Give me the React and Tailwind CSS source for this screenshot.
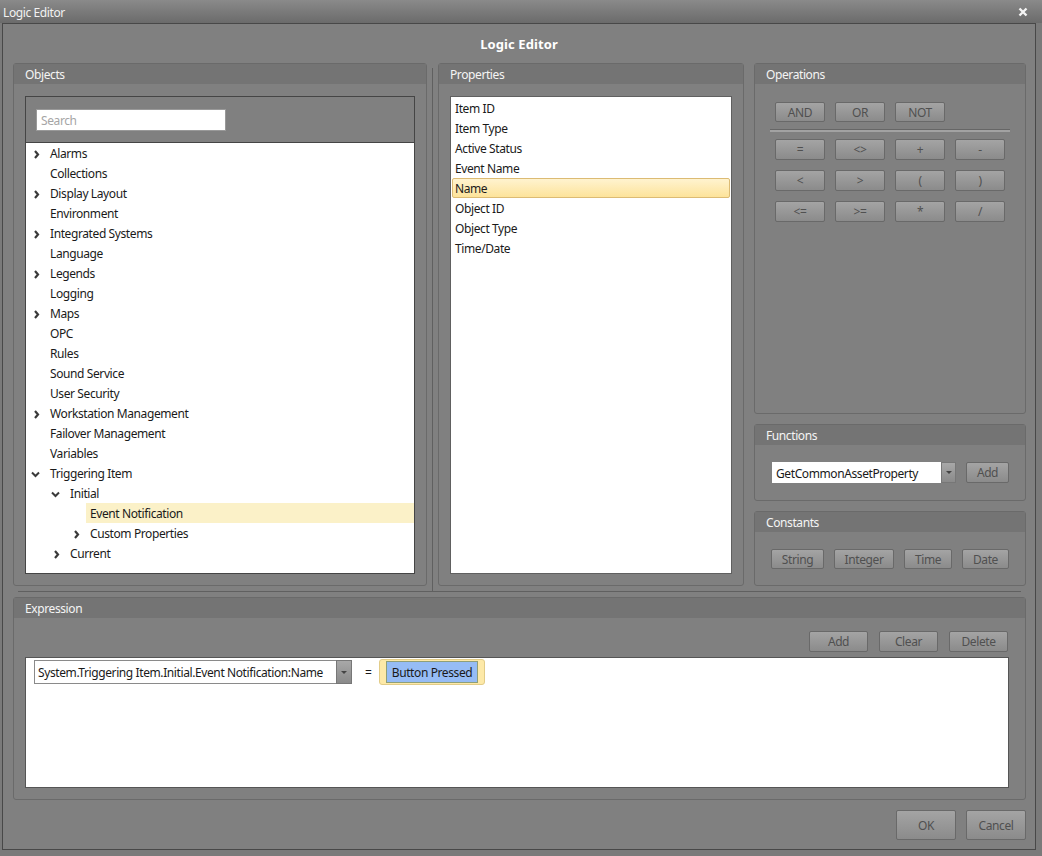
import React from "react";

const objects = [
  { label: "Alarms", level: 0, arrow: "right" },
  { label: "Collections", level: 0 },
  { label: "Display Layout", level: 0, arrow: "right" },
  { label: "Environment", level: 0 },
  { label: "Integrated Systems", level: 0, arrow: "right" },
  { label: "Language", level: 0 },
  { label: "Legends", level: 0, arrow: "right" },
  { label: "Logging", level: 0 },
  { label: "Maps", level: 0, arrow: "right" },
  { label: "OPC", level: 0 },
  { label: "Rules", level: 0 },
  { label: "Sound Service", level: 0 },
  { label: "User Security", level: 0 },
  { label: "Workstation Management", level: 0, arrow: "right" },
  { label: "Failover Management", level: 0 },
  { label: "Variables", level: 0 },
  { label: "Triggering Item", level: 0, arrow: "down" },
  { label: "Initial", level: 1, arrow: "down" },
  { label: "Event Notification", level: 2, selected: true },
  { label: "Custom Properties", level: 2, arrow: "right" },
  { label: "Current", level: 1, arrow: "right" },
];

const properties = ["Item ID", "Item Type", "Active Status", "Event Name", "Name", "Object ID", "Object Type", "Time/Date"];

const levelPad = ["pl-[7px]", "pl-[27px]", "pl-[47px]"];

const Arrow = ({ dir }) =>
  dir === "down" ? (
    <svg width="9" height="7" viewBox="0 0 9 7" className="-ml-[2px]">
      <path d="M1 1.5 L4.5 5 L8 1.5" fill="none" stroke="#3a3a3a" strokeWidth="2" />
    </svg>
  ) : (
    <svg width="7" height="9" viewBox="0 0 7 9">
      <path d="M2 1 L5 4.5 L2 8" fill="none" stroke="#3a3a3a" strokeWidth="2.2" />
    </svg>
  );

const Panel = ({ title, className = "", children }) => (
  <section className={`flex flex-col border border-[#6a6a6a] rounded-[3px] ${className}`}>
    <h2 className="h-[20px] shrink-0 bg-[#747474] pl-[11px] text-[12px] leading-[22px] font-normal text-[#f4f4f4]">
      {title}
    </h2>
    <div className="flex-1 flex flex-col min-h-0">{children}</div>
  </section>
);

const Btn = ({ className = "", children }) => (
  <button className={`shrink-0 rounded-[2px] border border-[#696969] bg-gradient-to-b from-[#a4a4a4] to-[#8b8b8b] pt-px text-[12px] leading-none text-[#505050] ${className}`}>
    {children}
  </button>
);

const ComboArrow = ({ className = "" }) => (
  <div className={`flex items-center justify-center border border-[#777] bg-gradient-to-b from-[#a8a8a8] to-[#8a8a8a] ${className}`}>
    <div className="h-0 w-0 border-x-[3px] border-t-[3px] border-x-transparent border-t-[#444]" />
  </div>
);

export default function App() {
  return (
    <div className="flex h-[856px] w-[1042px] flex-col overflow-hidden bg-[#7a7a7a] font-['Noto_Sans',sans-serif] text-[12px] tracking-[-0.4px]">
      {/* title bar */}
      <header className="flex h-[23px] shrink-0 items-center justify-between bg-gradient-to-b from-[#8a8a8a] to-[#6b6b6b] pl-[3px] pr-[14px]">
        <span className="pt-[2px] text-[12px] text-[#f2f2f2]">Logic Editor</span>
        <svg width="10" height="10" viewBox="0 0 10 10">
          <path d="M1.5 1.5 L8.5 8.5 M8.5 1.5 L1.5 8.5" stroke="#f4f4f4" strokeWidth="2.4" />
        </svg>
      </header>

      <main className="ml-[2px] mr-[6px] flex h-[827px] shrink-0 flex-col border border-[#484848] bg-[#808080] pl-[10px] pr-[9px] pb-[10px]">
        <h1 className="flex h-[39px] shrink-0 items-center justify-center pt-[2px] pr-px text-[13px] font-bold tracking-[0.1px] text-white">
          Logic Editor
        </h1>

        <div className="flex h-[523px] shrink-0">
          {/* objects */}
          <Panel title="Objects" className="w-[414px] shrink-0">
            <div className="mx-[11px] mb-[11px] mt-[12px] flex flex-1 flex-col border border-[#454545]">
              <div className="flex h-[46px] shrink-0 items-center border-b border-[#454545] bg-[#808080] pl-[10px]">
                <input
                  readOnly
                  placeholder="Search"
                  className="h-[22px] w-[190px] border border-[#999] bg-white px-[4px] pt-[2px] text-[12px] placeholder:text-[#a5a5a5]"
                />
              </div>
              <ul className="flex-1 bg-white text-[#1a1a1a]">
                {objects.map((o) => (
                  <li key={o.label} className={`flex h-[20px] items-stretch ${levelPad[o.level]}`}>
                    <span className="flex w-[13px] shrink-0 items-center justify-start pt-[2px]">
                      {o.arrow && <Arrow dir={o.arrow} />}
                    </span>
                    <span className={`flex flex-1 items-center pl-[4px] pt-[2px] ${o.selected ? "bg-[#fbf1c8]" : ""}`}>
                      {o.label}
                    </span>
                  </li>
                ))}
              </ul>
            </div>
          </Panel>

          {/* divider between objects and properties */}
          <div className="mx-[5px] mt-[5px] h-[524px] w-px shrink-0 bg-[#606060]" />

          {/* properties */}
          <Panel title="Properties" className="w-[306px] shrink-0">
            <ul className="mx-[11px] mb-[11px] mt-[12px] flex-1 border border-[#606060] bg-white px-px pt-[2px] text-[#1a1a1a]">
              {properties.map((p) => (
                <li
                  key={p}
                  className={
                    p === "Name"
                      ? "-mt-px mb-px flex h-[20px] items-center rounded-[2px] border border-[#dcbb74] bg-gradient-to-b from-[#fff3cf] to-[#fde39a] pl-[2px] pt-[2px]"
                      : "flex h-[20px] items-center pl-[3px]"
                  }
                >
                  {p}
                </li>
              ))}
            </ul>
          </Panel>

          {/* right column */}
          <div className="ml-[10px] flex w-[272px] shrink-0 flex-col gap-[10px]">
            <Panel title="Operations" className="flex-1">
              <div className="pl-[20px] pt-[18px]">
                <div className="flex gap-[10px]">
                  <Btn className="h-[20px] w-[50px]">AND</Btn>
                  <Btn className="h-[20px] w-[50px]">OR</Btn>
                  <Btn className="h-[20px] w-[50px]">NOT</Btn>
                </div>
                <div className="-ml-[5px] mt-[7px] h-[3px] w-[240px] border-t border-[#666] bg-[#a2a2a2]" />
                <div className="mt-[7px] grid w-[230px] grid-cols-4 gap-x-[10px] gap-y-[10px]">
                  {["=", "<>", "+", "-", "<", ">", "(", ")", "<=", ">=", "*", "/"].map((op) => (
                    <Btn key={op} className="h-[21px] w-[50px]">{op}</Btn>
                  ))}
                </div>
              </div>
            </Panel>

            <Panel title="Functions" className="h-[77px] shrink-0">
              <div className="flex items-center pl-[17px] pt-[17px]">
                <div className="flex h-[21px] w-[184px] items-center bg-white pl-[4px] text-[#1a1a1a]">
                  <span className="flex-1 whitespace-nowrap pt-[2px]">GetCommonAssetProperty</span>
                  <ComboArrow className="h-[21px] w-[15px]" />
                </div>
                <Btn className="ml-[10px] h-[21px] w-[43px]">Add</Btn>
              </div>
            </Panel>

            <Panel title="Constants" className="h-[75px] shrink-0">
              <div className="flex gap-[10px] pl-[16px] pt-[17px]">
                <Btn className="h-[20px] w-[53px]">String</Btn>
                <Btn className="h-[20px] w-[60px]">Integer</Btn>
                <Btn className="h-[20px] w-[48px]">Time</Btn>
                <Btn className="h-[20px] w-[47px]">Date</Btn>
              </div>
            </Panel>
          </div>
        </div>

        {/* horizontal divider */}
        <div className="mx-[5px] mb-[5px] mt-[5px] h-px shrink-0 bg-[#606060]" />

        {/* expression */}
        <Panel title="Expression" className="h-[203px] shrink-0">
          <div className="flex flex-1 flex-col pb-[11px] pl-[11px] pr-[16px] pt-[13px]">
            <div className="mr-px flex justify-end gap-[11px]">
              <Btn className="h-[21px] w-[59px]">Add</Btn>
              <Btn className="h-[21px] w-[59px]">Clear</Btn>
              <Btn className="h-[21px] w-[59px]">Delete</Btn>
            </div>
            <div className="mt-[5px] flex flex-1 items-start border border-[#555] bg-white pl-[8px] pt-[1px] text-[#1a1a1a]">
              <div className="mt-px flex h-[24px] w-[318px] items-center border border-[#8a8a8a] pl-[3px]">
                <span className="flex-1 whitespace-nowrap pt-[2px]">System.Triggering Item.Initial.Event Notification:Name</span>
                <ComboArrow className="-mr-px h-[24px] w-[16px]" />
              </div>
              <span className="ml-[13px] mt-[5px] w-[14px]">=</span>
              <div className="flex h-[26px] items-center rounded-[3px] border border-[#e2cc88] bg-[#fde9a8] px-[6px]">
                <div className="flex h-[22px] w-[92px] items-center justify-center whitespace-nowrap border border-[#8f9f78] bg-[#96bcf5] pt-[2px]">
                  Button Pressed
                </div>
              </div>
            </div>
          </div>
        </Panel>

        {/* footer */}
        <footer className="mt-[10px] flex justify-end gap-[10px]">
          <Btn className="h-[30px] w-[60px]">OK</Btn>
          <Btn className="h-[30px] w-[60px]">Cancel</Btn>
        </footer>
      </main>
    </div>
  );
}
